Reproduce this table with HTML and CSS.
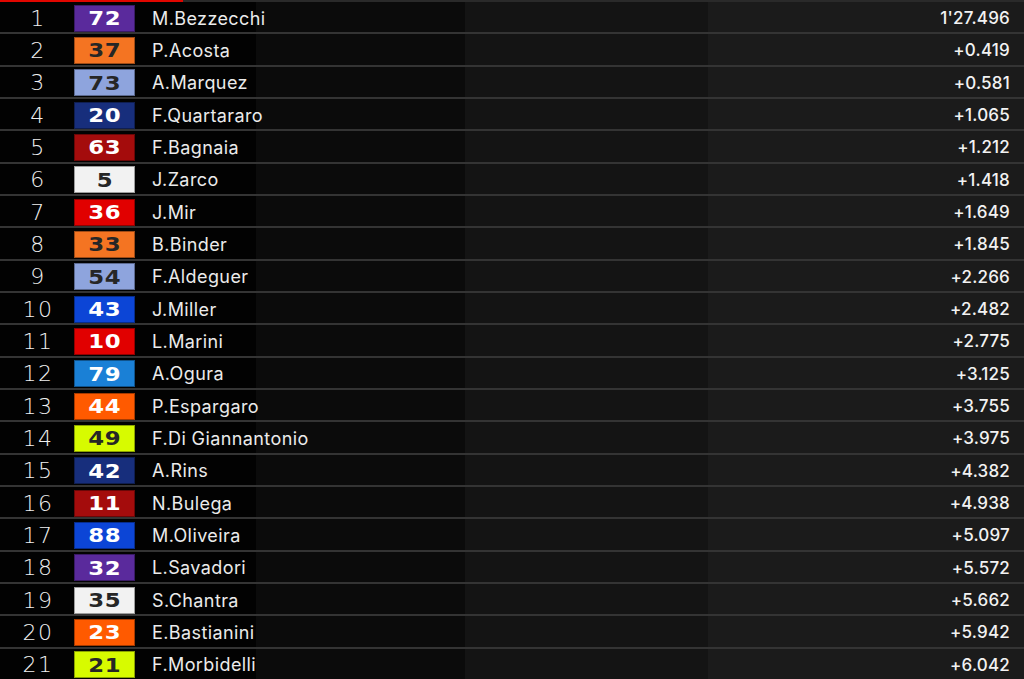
FILE: index.html
```html
<!DOCTYPE html>
<html>
<head>
<meta charset="utf-8">
<link rel="stylesheet" href="styles.css">
</head>
<body>
<div class="board">
  <div class="row first"><span class="pos">1</span><span class="num c-purple"><b>72</b></span><span class="name">M.Bezzecchi</span><span class="time">1'27.496</span></div>
  <div class="row"><span class="pos">2</span><span class="num c-orange dark"><b>37</b></span><span class="name">P.Acosta</span><span class="time">+0.419</span></div>
  <div class="row"><span class="pos">3</span><span class="num c-lblue dark"><b>73</b></span><span class="name">A.Marquez</span><span class="time">+0.581</span></div>
  <div class="row"><span class="pos">4</span><span class="num c-navy"><b>20</b></span><span class="name">F.Quartararo</span><span class="time">+1.065</span></div>
  <div class="row"><span class="pos">5</span><span class="num c-dred"><b>63</b></span><span class="name">F.Bagnaia</span><span class="time">+1.212</span></div>
  <div class="row"><span class="pos">6</span><span class="num c-white dark"><b>5</b></span><span class="name">J.Zarco</span><span class="time">+1.418</span></div>
  <div class="row"><span class="pos">7</span><span class="num c-red"><b>36</b></span><span class="name">J.Mir</span><span class="time">+1.649</span></div>
  <div class="row"><span class="pos">8</span><span class="num c-orange dark"><b>33</b></span><span class="name">B.Binder</span><span class="time">+1.845</span></div>
  <div class="row"><span class="pos">9</span><span class="num c-lblue dark"><b>54</b></span><span class="name">F.Aldeguer</span><span class="time">+2.266</span></div>
  <div class="row"><span class="pos">10</span><span class="num c-blue"><b>43</b></span><span class="name">J.Miller</span><span class="time">+2.482</span></div>
  <div class="row"><span class="pos">11</span><span class="num c-red"><b>10</b></span><span class="name">L.Marini</span><span class="time">+2.775</span></div>
  <div class="row"><span class="pos">12</span><span class="num c-sky"><b>79</b></span><span class="name">A.Ogura</span><span class="time">+3.125</span></div>
  <div class="row"><span class="pos">13</span><span class="num c-orange2"><b>44</b></span><span class="name">P.Espargaro</span><span class="time">+3.755</span></div>
  <div class="row"><span class="pos">14</span><span class="num c-lime dark"><b>49</b></span><span class="name">F.Di Giannantonio</span><span class="time">+3.975</span></div>
  <div class="row"><span class="pos">15</span><span class="num c-navy"><b>42</b></span><span class="name">A.Rins</span><span class="time">+4.382</span></div>
  <div class="row"><span class="pos">16</span><span class="num c-dred"><b>11</b></span><span class="name">N.Bulega</span><span class="time">+4.938</span></div>
  <div class="row"><span class="pos">17</span><span class="num c-blue"><b>88</b></span><span class="name">M.Oliveira</span><span class="time">+5.097</span></div>
  <div class="row"><span class="pos">18</span><span class="num c-purple"><b>32</b></span><span class="name">L.Savadori</span><span class="time">+5.572</span></div>
  <div class="row"><span class="pos">19</span><span class="num c-white dark"><b>35</b></span><span class="name">S.Chantra</span><span class="time">+5.662</span></div>
  <div class="row"><span class="pos">20</span><span class="num c-orange2"><b>23</b></span><span class="name">E.Bastianini</span><span class="time">+5.942</span></div>
  <div class="row"><span class="pos">21</span><span class="num c-lime dark"><b>21</b></span><span class="name">F.Morbidelli</span><span class="time">+6.042</span></div>
</div>
</body>
</html>
```
FILE: styles.css
```css
html, body {
  margin: 0;
  padding: 0;
  height: 100%;
}
body {
  background: linear-gradient(to right, #020202 0 256px, #0b0b0b 256px 465px, #141414 465px 708px, #1b1b1b 708px 1024px);
  color: #ececec;
  font-family: Inter, "Noto Sans", sans-serif;
  overflow: hidden;
}
.board {
  display: grid;
  grid-template-rows: repeat(21, 1fr);
  height: 679px;
  width: 1024px;
}
.row {
  display: flex;
  align-items: center;
  border-top: 2px solid #343434;
  box-sizing: border-box;
  min-height: 0;
  padding-top: 2px;
}
.row.first {
  border-top: 2px solid transparent;
  border-image: linear-gradient(to right, #e10600 0 184px, #2a2a2a 184px) 1;
}
.pos {
  width: 74px;
  box-sizing: border-box;
  padding-left: 2px;
  text-align: center;
  font-family: "DejaVu Sans", sans-serif;
  font-weight: 200;
  font-size: 22px;
  letter-spacing: 1.5px;
  color: #f0f0f0;
}
.num {
  width: 61px;
  height: 27px;
  box-sizing: border-box;
  border: 1px solid rgba(0,0,0,0.35);
  display: flex;
  align-items: center;
  justify-content: center;
  color: #ffffff;
}
.num b {
  display: inline-block;
  font-family: "DejaVu Sans", sans-serif;
  font-weight: bold;
  font-size: 19px;
  letter-spacing: 0.5px;
  transform: scaleX(1.2);
}
.num.dark { color: #262626; }
.name {
  margin-left: 17px;
  flex: 1;
  font-size: 18px;
  font-weight: 400;
  letter-spacing: 0.4px;
  color: #ebebeb;
}
.time {
  padding-right: 14px;
  font-size: 17px;
  font-weight: 500;
  letter-spacing: 0.2px;
  color: #f2f2f2;
}
.c-purple { background: #5a2a9c; }
.c-orange { background: #f47422; }
.c-orange2 { background: #ff5a00; }
.c-lblue { background: #8ea4dd; }
.c-navy { background: #172e7c; }
.c-dred { background: #a40c0c; }
.c-white { background: #f2f2f2; }
.c-red { background: #e10000; }
.c-blue { background: #0c45d6; }
.c-sky { background: #1a80d6; }
.c-lime { background: #d7fb00; }
```
